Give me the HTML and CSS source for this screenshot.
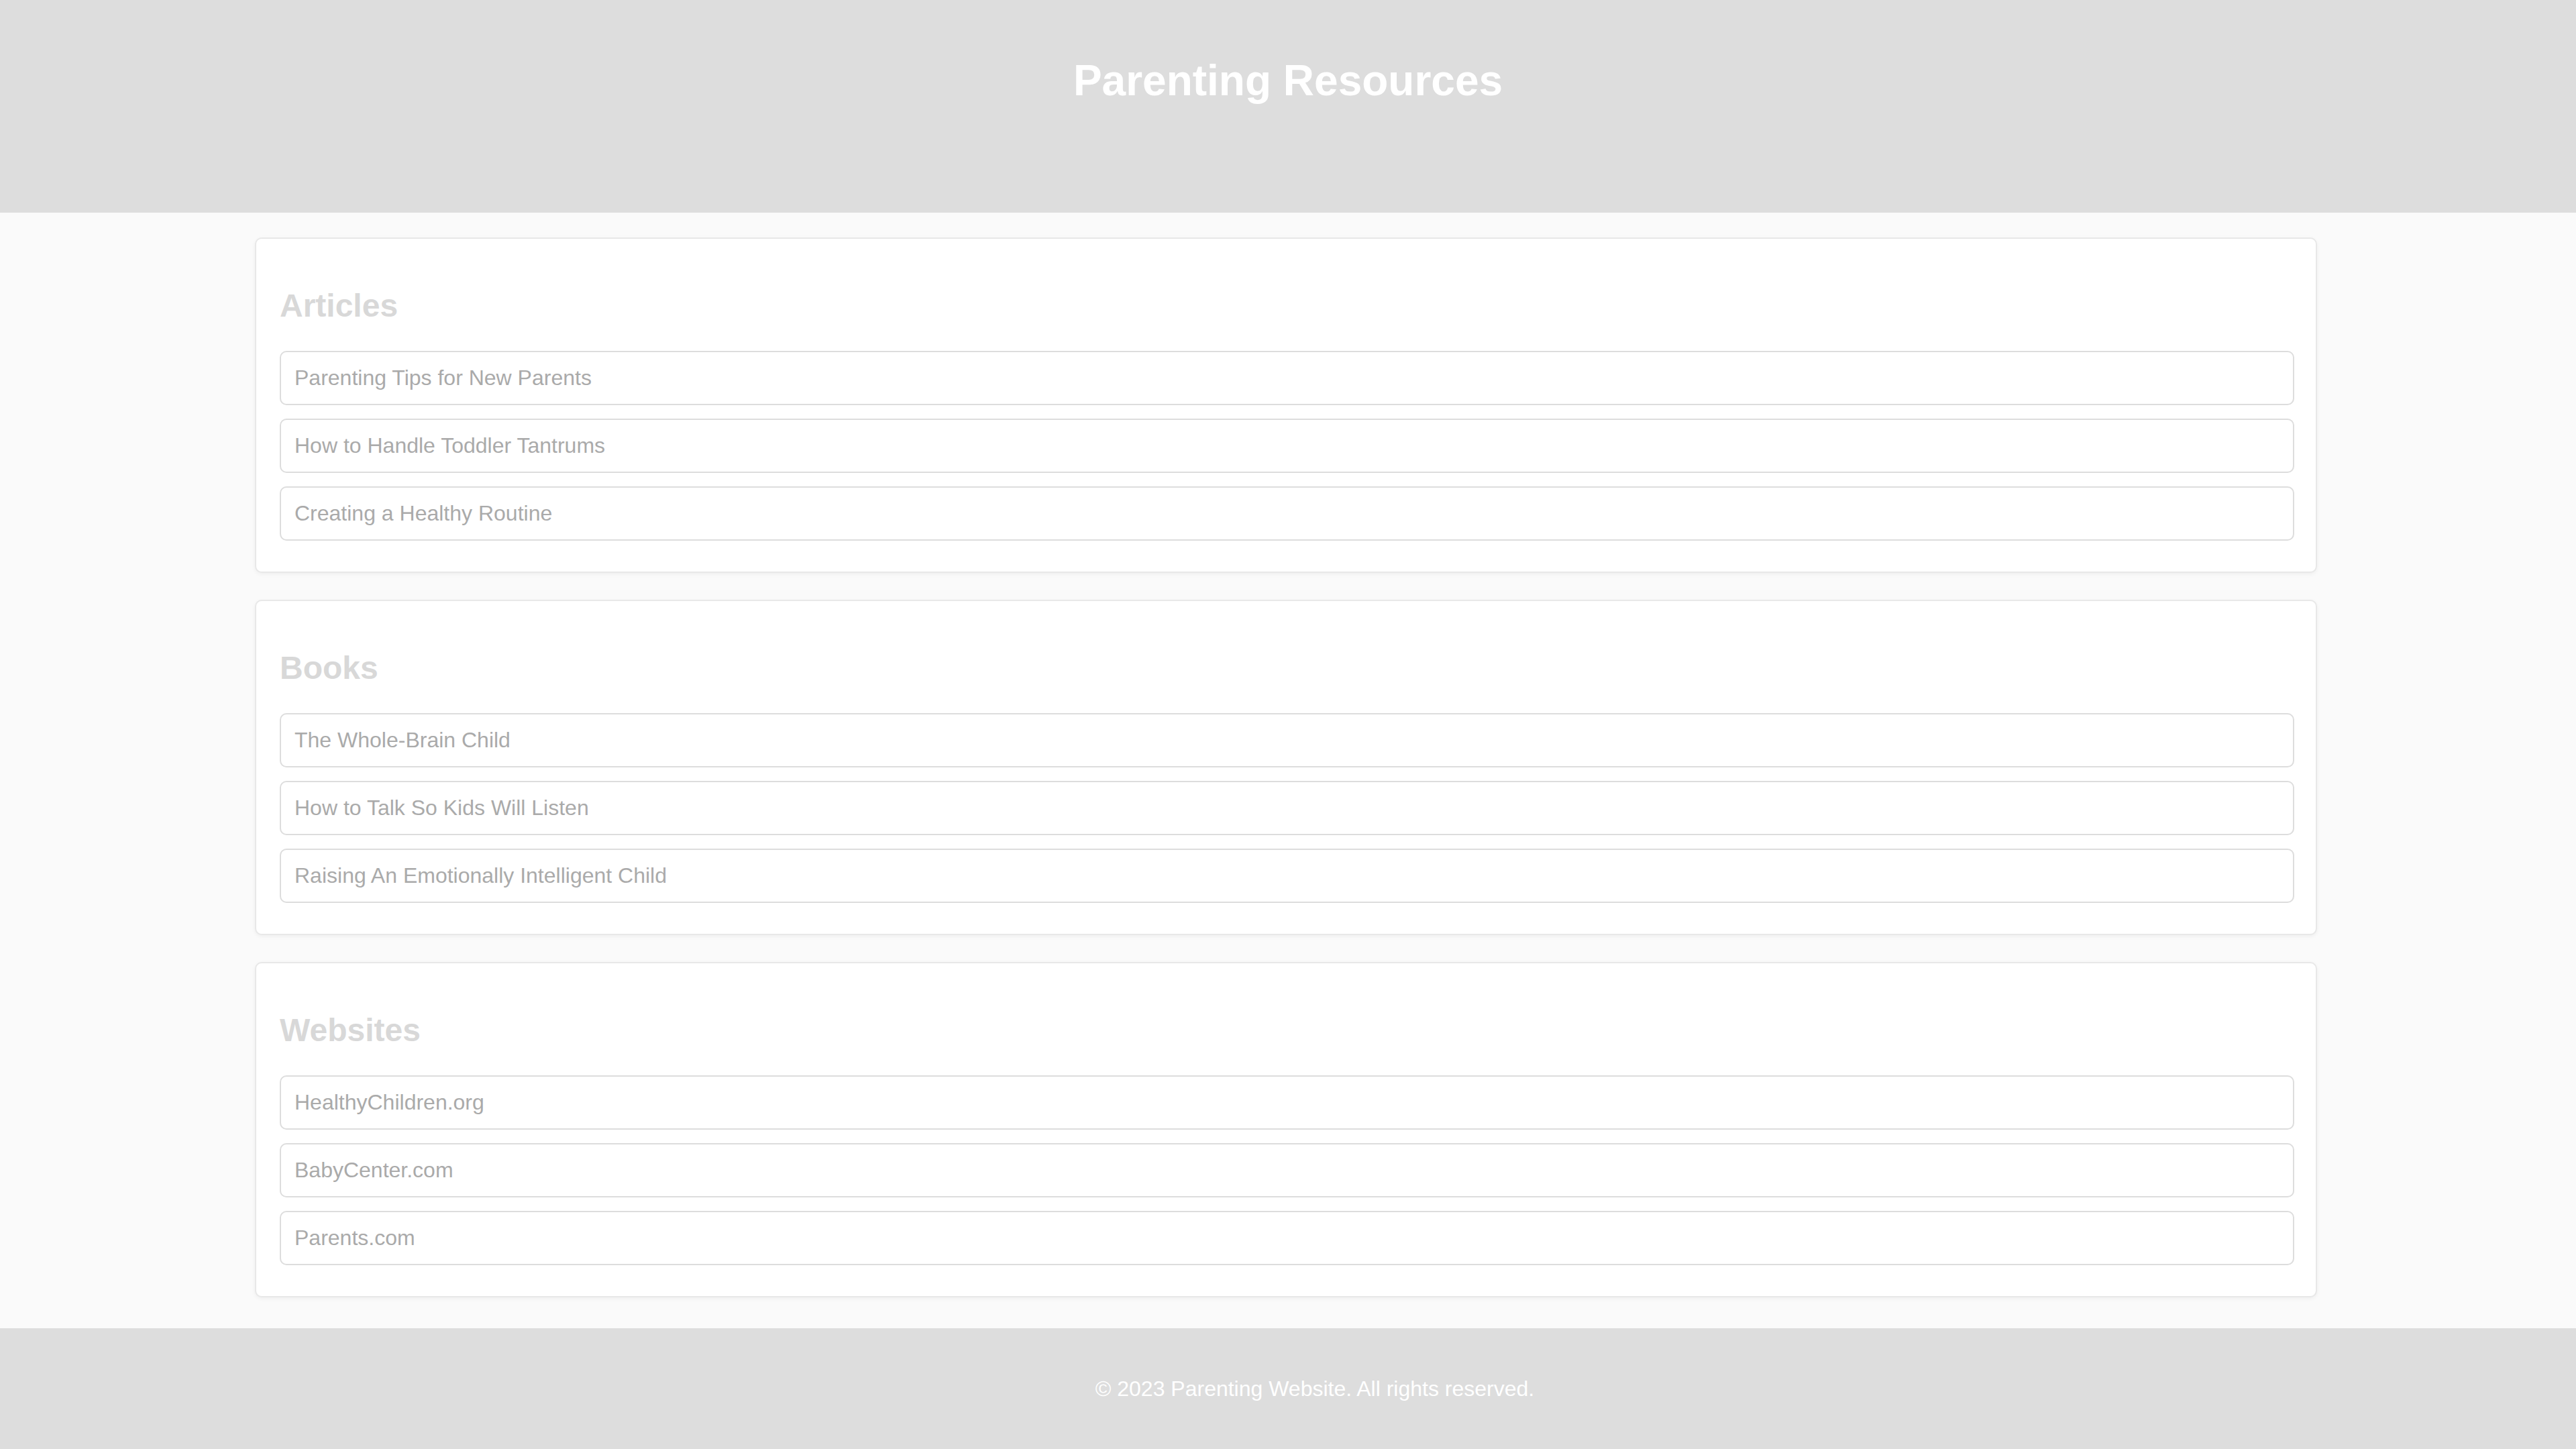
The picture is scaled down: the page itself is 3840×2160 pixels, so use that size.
FILE: index.html
```html
<!DOCTYPE html>
<html lang="en">
<head>
<meta charset="utf-8">
<title>Parenting Resources</title>
<link rel="stylesheet" href="styles.css">
</head>
<body>
<header class="site-header">
  <h1 class="site-title">Parenting Resources</h1>
</header>
<main class="content">
  <section class="card">
    <h2 class="card-title">Articles</h2>
    <ul class="resource-list">
      <li class="resource">Parenting Tips for New Parents</li>
      <li class="resource">How to Handle Toddler Tantrums</li>
      <li class="resource">Creating a Healthy Routine</li>
    </ul>
  </section>
  <section class="card">
    <h2 class="card-title">Books</h2>
    <ul class="resource-list">
      <li class="resource">The Whole-Brain Child</li>
      <li class="resource">How to Talk So Kids Will Listen</li>
      <li class="resource">Raising An Emotionally Intelligent Child</li>
    </ul>
  </section>
  <section class="card">
    <h2 class="card-title">Websites</h2>
    <ul class="resource-list">
      <li class="resource">HealthyChildren.org</li>
      <li class="resource">BabyCenter.com</li>
      <li class="resource">Parents.com</li>
    </ul>
  </section>
</main>
<footer class="site-footer">
  <p class="footer-text">&copy; 2023 Parenting Website. All rights reserved.</p>
</footer>
</body>
</html>
```

FILE: styles.css
```css
html, body {
  margin: 0;
  padding: 0;
}

body {
  background: #fafafa;
  font-family: "Liberation Sans", Arial, sans-serif;
  font-size: 32px;
}

.site-header {
  background: #dddddd;
  padding: 40px 0 117px;
  text-align: center;
}

.site-title {
  margin: 43px 0;
  font-size: 64px;
  font-weight: bold;
  color: #ffffff;
}

.content {
  padding: 37px 0 46px;
}

.card {
  box-sizing: border-box;
  width: calc(80% + 2px);
  margin: 0 0 40px calc(10% - 4px);
  padding: 32px 32px 32px 35px;
  background: #ffffff;
  border: 2px solid #e8e8e8;
  border-radius: 10px;
  box-shadow: 0 2px 6px rgba(0, 0, 0, 0.05);
}

.card:last-child {
  margin-bottom: 0;
}

.card-title {
  margin: 40px 0;
  font-size: 48px;
  font-weight: bold;
  color: #d8d8d8;
}

.resource-list {
  list-style: none;
  margin: 0 0 14px;
  padding: 0;
}

.resource {
  padding: 20px;
  border: 2px solid #dddddd;
  border-radius: 10px;
  color: #aaaaaa;
  font-size: 32px;
}

.resource + .resource {
  margin-top: 20px;
}

.site-footer {
  background: #dddddd;
  padding: 40px 0 40px 80px;
  text-align: center;
}

.footer-text {
  margin: 32px 0;
  color: #ffffff;
  font-size: 32px;
}
```
